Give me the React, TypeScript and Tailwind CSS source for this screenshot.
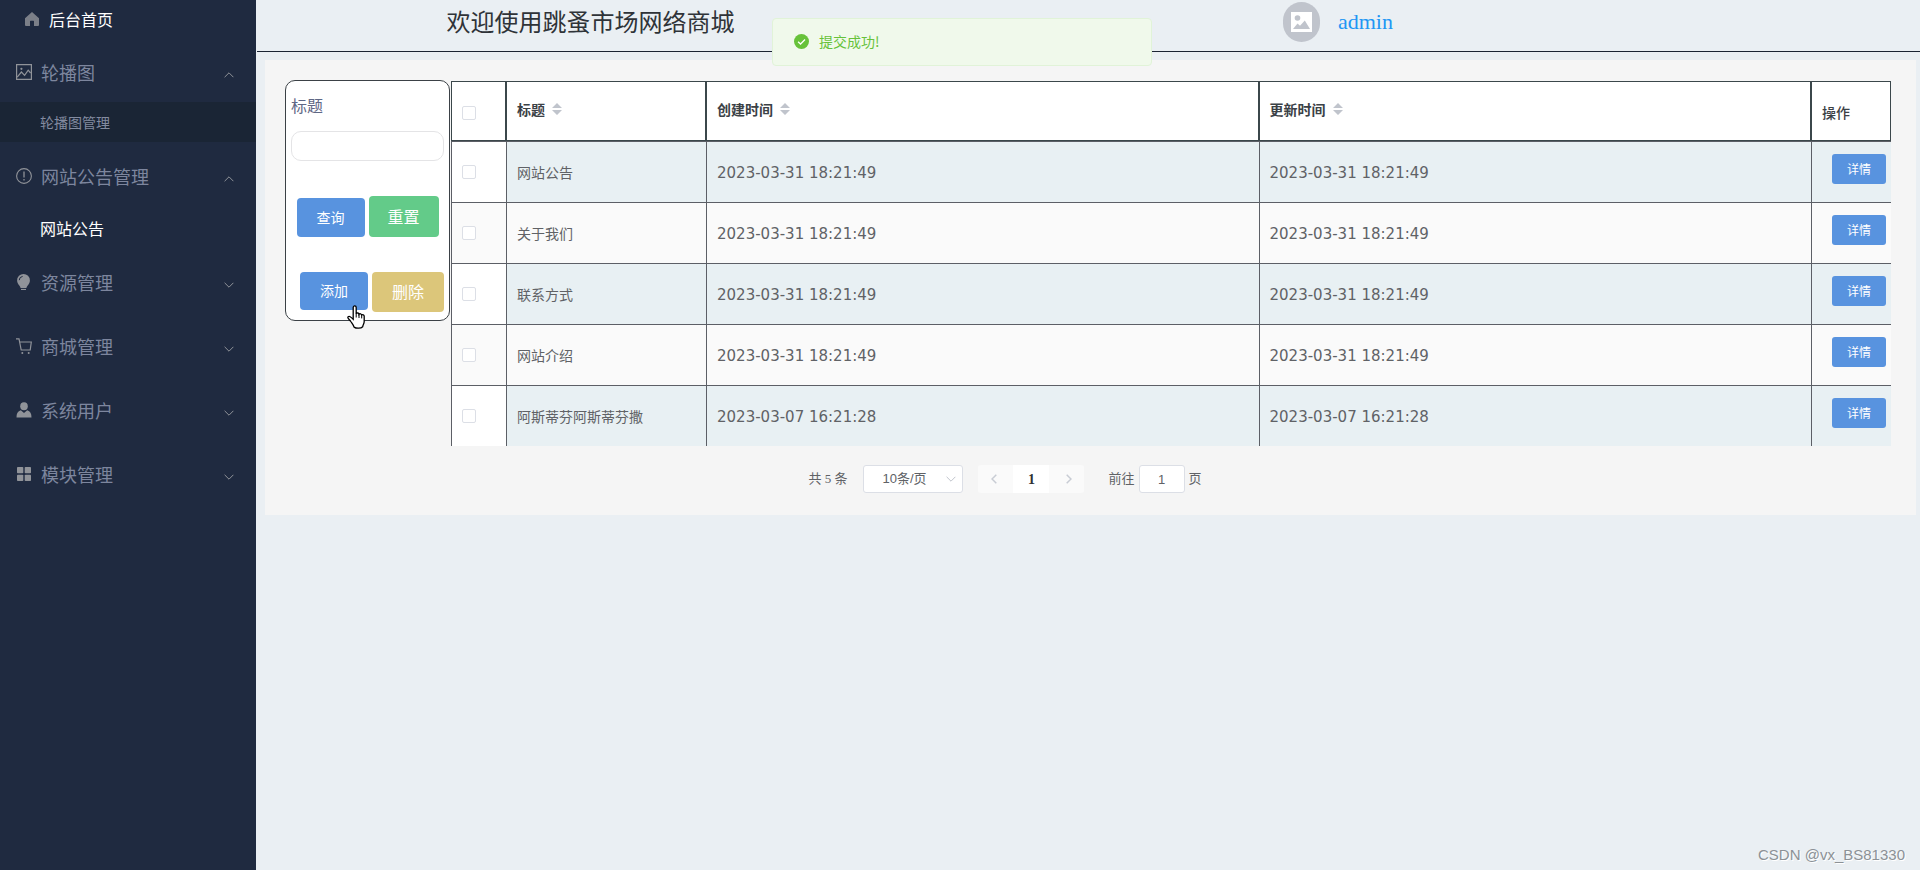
import { useState } from "react";
import type { ReactNode } from "react";
import clsx from "clsx";

// ── Types and data ────────────────────────────────────────────────────────────

type Notice = {
  id: number;
  title: string;
  createdAt: string;
  updatedAt: string;
};

type MenuGroup = {
  label: string;
  icon: ReactNode;
  open?: boolean;
  children?: ReactNode;
};

const NOTICES: Notice[] = [
  { id: 1, title: "网站公告", createdAt: "2023-03-31 18:21:49", updatedAt: "2023-03-31 18:21:49" },
  { id: 2, title: "关于我们", createdAt: "2023-03-31 18:21:49", updatedAt: "2023-03-31 18:21:49" },
  { id: 3, title: "联系方式", createdAt: "2023-03-31 18:21:49", updatedAt: "2023-03-31 18:21:49" },
  { id: 4, title: "网站介绍", createdAt: "2023-03-31 18:21:49", updatedAt: "2023-03-31 18:21:49" },
  { id: 5, title: "阿斯蒂芬阿斯蒂芬撒", createdAt: "2023-03-07 16:21:28", updatedAt: "2023-03-07 16:21:28" },
];

// ── Icons ─────────────────────────────────────────────────────────────────────

function HomeIcon() {
  return (
    <svg className="size-[14px] shrink-0 text-[#7b7f88]" viewBox="0 0 14 14" fill="currentColor" aria-hidden>
      <path d="M7 0 14 6.2V13a1 1 0 0 1-1 1H9V9.4a.6.6 0 0 0-.6-.6H5.6a.6.6 0 0 0-.6.6V14H1a1 1 0 0 1-1-1V6.2z" />
    </svg>
  );
}

function PictureIcon() {
  return (
    <svg className="size-4" viewBox="0 0 16 16" fill="none" stroke="currentColor" aria-hidden>
      <path d="M.6 .6h14.8v14.8H.6z" strokeWidth={1.2} />
      <path d="M1.200 13.200 5.400 8 8.600 11.400 12.200 6.200 14.600 9" strokeWidth={1.2} />
      <circle cx="5.4" cy="4.8" r="1.1" fill="currentColor" stroke="none" />
    </svg>
  );
}

function WarningIcon() {
  return (
    <svg className="size-4" viewBox="0 0 16 16" fill="none" stroke="currentColor" strokeWidth={1.1} aria-hidden>
      <circle cx="8" cy="8" r="7.4" />
      <path d="M8 3.6v6" strokeWidth={1.3} />
      <path d="M8 11v1.4" strokeWidth={1.3} />
    </svg>
  );
}

function BulbIcon() {
  return (
    <svg className="size-4" viewBox="0 0 16 16" aria-hidden>
      <path
        fill="currentColor"
        d="M7.5 0a6.4 6.4 0 0 1 6.4 6.4c0 2.3-1.1 3.6-2.2 5C11 12.2 10.6 13 10.4 14H4.6c-.2-1-.6-1.8-1.3-2.6C2.2 10 1.1 8.7 1.1 6.4A6.4 6.4 0 0 1 7.5 0z"
      />
      <path fill="currentColor" d="M5 14.9h5v1.1H5z" />
      <path d="M3.2 6.2a4 4 0 0 1 3.4-3.8" fill="none" stroke="#1f2a40" strokeWidth={1} />
    </svg>
  );
}

function CartIcon() {
  return (
    <svg className="size-4" viewBox="0 0 16 16" fill="none" stroke="currentColor" strokeWidth={1.2} aria-hidden>
      <path d="M0 .8h3L5.200 12H14.200L15.300 4H3.800" />
      <circle cx="6.3" cy="14.9" r="1" fill="currentColor" stroke="none" />
      <circle cx="12.7" cy="14.9" r="1" fill="currentColor" stroke="none" />
    </svg>
  );
}

function UserIcon() {
  return (
    <svg className="size-4" viewBox="0 0 16 16" fill="currentColor" aria-hidden>
      <ellipse cx="8" cy="4.2" rx="3.8" ry="4" />
      <path d="M.5 15.500c0-4 1.200-6.300 4.300-7.300L8 11l3.200-2.800c3.100 1 4.300 3.300 4.300 7.300z" />
    </svg>
  );
}

function MenuIcon() {
  return (
    <svg className="size-4" viewBox="0 0 16 16" fill="currentColor" aria-hidden>
      <rect x="1" y="1" width="6.3" height="6.3" rx=".8" />
      <rect x="8.7" y="1" width="6.3" height="6.3" rx=".8" />
      <rect x="1" y="8.7" width="6.3" height="6.3" rx=".8" />
      <rect x="8.7" y="8.7" width="6.3" height="6.3" rx=".8" />
    </svg>
  );
}

function Chevron({ className }: { className?: string }) {
  return (
    <svg className={clsx("h-[6px] w-[10px]", className)} viewBox="0 0 10 6" fill="none" stroke="currentColor" aria-hidden>
      <path d="M.6 .8 5 5.2 9.4 .8" />
    </svg>
  );
}

function SortCaret() {
  return (
    <svg className="h-[12px] w-[10px] text-[#c0c4cc]" viewBox="0 0 10 12" fill="currentColor" aria-hidden>
      <path d="M5 0 10 5H0zM5 12 0 7h10z" />
    </svg>
  );
}

function HandCursor() {
  return (
    <svg className="pointer-events-none absolute top-[224px] left-[61px] h-[25px] w-[19px]" viewBox="0 0 19 25" aria-hidden>
      <path
        d="M6.2 2.6c0-2.2 3-2.2 3 0v6c.5-1 2.6-.8 2.8.7.6-1 2.5-.7 2.7.8.8-.8 2.500-.4 2.500 1.200v5.200c0 2.300-1.200 3.300-1.500 5.200-1.800 1.800-6.300 2-8.600.4C6.500 20 5 18.200 3.800 16.500 2.800 15 1.400 14 .9 12.800c-.3-1.300 1.200-1.800 2.300-1.100 1.200.7 2 1.600 3 2.600z"
        fill="#fff"
        stroke="#000"
        strokeWidth={1.3}
      />
      <path d="M9.2 8v4.5M12 9.4v3.6M14.7 10.4v3" fill="none" stroke="#000" />
    </svg>
  );
}

// ── Sidebar ───────────────────────────────────────────────────────────────────

const MENU: MenuGroup[] = [
  {
    label: "轮播图",
    icon: <PictureIcon />,
    open: true,
    children: (
      <a href="#carousel" className="flex h-10 items-center bg-[#1a2535] pl-10 text-sm text-[#838ba0]">
        轮播图管理
      </a>
    ),
  },
  {
    label: "网站公告管理",
    icon: <WarningIcon />,
    open: true,
    children: (
      <a href="#notice" className="flex h-[42px] items-center pt-[2px] pl-10 text-base text-white">
        网站公告
      </a>
    ),
  },
  { label: "资源管理", icon: <BulbIcon /> },
  { label: "商城管理", icon: <CartIcon /> },
  { label: "系统用户", icon: <UserIcon /> },
  { label: "模块管理", icon: <MenuIcon /> },
];

function Sidebar() {
  return (
    <nav className="w-64 shrink-0 bg-[#1f2a40]">
      <a href="#home" className="flex h-[38px] items-center gap-[10px] pl-[25px] text-base text-white">
        <HomeIcon />
        后台首页
      </a>
      {MENU.map((group) => (
        <div key={group.label}>
          <button
            type="button"
            aria-expanded={!!group.open}
            className="flex h-16 w-full items-center pt-1 pr-[22px] pl-4 text-lg text-[#7d869e]"
          >
            <span className="mr-[9px] text-[#909399]">{group.icon}</span>
            {group.label}
            <Chevron className={clsx("mt-[6px] ml-auto text-[#909399]", group.open && "rotate-180")} />
          </button>
          {group.children}
        </div>
      ))}
    </nav>
  );
}

// ── Header ────────────────────────────────────────────────────────────────────

function Header() {
  return (
    <header className="flex h-[52px] border-b border-[#1b2433] pb-2">
      <h1 className="flex w-2/5 items-center justify-center pb-[2px] pl-[2px] text-2xl text-[#2f3338]">
        欢迎使用跳蚤市场网络商城
      </h1>
      <div className="flex w-1/2 items-center justify-center gap-[18px]">
        <span className="flex h-10 w-[37px] items-center justify-center rounded-full bg-[#c0c4cc]">
          <svg className="h-5 w-[21px]" viewBox="0 0 21 20" aria-hidden>
            <path d="M0 0h21v20H0z" fill="#fff" />
            <circle cx="6.5" cy="6" r="2.8" fill="#c0c4cc" />
            <path d="M2 17 6.5 11.5 9 13.8 13.8 8.5 19 17z" fill="#c0c4cc" />
          </svg>
        </span>
        <a href="#admin" className="font-['Liberation_Serif',serif] text-[22px] text-[#2196f3]">
          admin
        </a>
      </div>
    </header>
  );
}

// ── Search card ───────────────────────────────────────────────────────────────

function SearchCard() {
  const [title, setTitle] = useState("");

  return (
    <form
      className="relative mr-px w-[165px] shrink-0 self-start rounded-[10px] border border-[#3b4146] bg-white px-[5px] pt-[10px] pb-2"
      onSubmit={(e) => e.preventDefault()}
    >
      <label htmlFor="notice-title" className="block leading-7 text-[#5f6785]">
        标题
      </label>
      <input
        id="notice-title"
        type="text"
        value={title}
        onChange={(e) => setTitle(e.target.value)}
        className="mt-3 block h-[30px] w-full rounded-[10px] border border-[#e4e4e6] px-2 text-sm outline-none"
      />
      <div className="mt-[35px] flex items-end justify-center gap-1">
        <button type="submit" className="h-[39px] w-[68px] rounded bg-[#5893df] pb-[2px] text-sm text-white">
          查询
        </button>
        <button
          type="reset"
          onClick={() => setTitle("")}
          className="h-[41px] w-[70px] rounded bg-[#63cb89] pb-[2px] text-base text-white"
        >
          重置
        </button>
      </div>
      <div className="mt-[35px] flex items-start justify-end gap-1">
        <button type="button" className="h-[38px] w-[68px] rounded bg-[#5893df] pb-[2px] text-sm text-white">
          添加
        </button>
        <button type="button" className="h-10 w-[72px] rounded bg-[#dcc67a] pb-[2px] text-base text-white">
          删除
        </button>
      </div>
      <HandCursor />
    </form>
  );
}

// ── Table ─────────────────────────────────────────────────────────────────────

const TH = "border border-[#3b474b] bg-white px-[10px] text-left";

function Checkbox({ label }: { label: string }) {
  return (
    <input
      type="checkbox"
      aria-label={label}
      className="block size-[14px] appearance-none rounded-[2px] border border-[#dcdfe6] bg-white checked:bg-[#409eff]"
    />
  );
}

function SortHeader({ children }: { children: ReactNode }) {
  return (
    <th className={TH}>
      <button type="button" className="flex items-center gap-[7px] pb-1 font-bold">
        {children}
        <SortCaret />
      </button>
    </th>
  );
}

function NoticeTable() {
  return (
    <table className="w-full min-w-0 table-fixed border-separate border-spacing-0 text-sm text-[#606266]">
      <colgroup>
        <col className="w-[55px]" />
        <col className="w-[200px]" />
        <col />
        <col />
        <col className="w-[80px]" />
      </colgroup>
      <thead>
        <tr className="h-[60px] text-[#3b4146]">
          <th className={clsx(TH, "pt-1")}>
            <Checkbox label="全选" />
          </th>
          <SortHeader>标题</SortHeader>
          <SortHeader>创建时间</SortHeader>
          <SortHeader>更新时间</SortHeader>
          <th className={clsx(TH, "pt-[2px] font-medium")}>操作</th>
        </tr>
      </thead>
      <tbody>
        {NOTICES.map((row, i) => {
          const striped = i % 2 === 1;
          const cell = clsx("border-t border-l border-[#5c5f66] px-[10px]", striped ? "bg-[#fafafa]" : "bg-[#e8f0f3]");
          return (
            <tr key={row.id} className="h-[61px]">
              <td className={clsx("border-t border-l border-[#5c5f66] px-[10px]", striped ? "bg-[#fafafa]" : "bg-white")}>
                <Checkbox label={row.title} />
              </td>
              <td className={cell}>{row.title}</td>
              <td className={clsx(cell, "pt-1 font-['DejaVu_Sans',sans-serif] text-[15px]")}>{row.createdAt}</td>
              <td className={clsx(cell, "pt-1 font-['DejaVu_Sans',sans-serif] text-[15px]")}>{row.updatedAt}</td>
              <td className={clsx(cell, "pr-[5px] pb-[6px] pl-5")}>
                <button type="button" className="block h-[30px] w-full rounded-[3px] bg-[#5893df] text-xs text-white">
                  详情
                </button>
              </td>
            </tr>
          );
        })}
      </tbody>
    </table>
  );
}

// ── Pagination ────────────────────────────────────────────────────────────────

function Pagination() {
  const [page, setPage] = useState("1");

  return (
    <div className="mt-[19px] mr-[166px] flex h-7 items-center justify-center font-['Liberation_Serif','Noto_Sans_CJK_SC',serif] text-[13px] text-[#606266]">
      <span>共 5 条</span>
      <div className="relative ml-4">
        <select
          aria-label="每页条数"
          className="block h-7 w-[100px] appearance-none rounded-[3px] border border-[#dcdfe6] bg-white pl-[18px] font-['Liberation_Sans','Noto_Sans_CJK_SC',sans-serif] outline-none"
        >
          <option>10条/页</option>
          <option>20条/页</option>
        </select>
        <Chevron className="pointer-events-none absolute top-[11px] right-[7px] text-[#c0c4cc]" />
      </div>
      <div className="ml-[15px] flex h-7 overflow-hidden rounded-[3px]">
        <button type="button" aria-label="上一页" disabled className="flex w-[35px] items-center justify-center bg-[#fafafa] pr-1">
          <svg className="h-[10px] w-[6px]" viewBox="0 0 6 10" fill="none" stroke="#c8ccd4" strokeWidth={1.5} aria-hidden>
            <path d="M5.300 .7 1 5l4.300 4.300" />
          </svg>
        </button>
        <button type="button" className="w-[36px] bg-white text-[14px] font-bold text-[#303133]">
          1
        </button>
        <button type="button" aria-label="下一页" disabled className="flex w-[35px] items-center justify-center bg-[#fafafa] pl-1">
          <svg className="h-[10px] w-[6px]" viewBox="0 0 6 10" fill="none" stroke="#c8ccd4" strokeWidth={1.5} aria-hidden>
            <path d="M.7 .7 5 5 .7 9.3" />
          </svg>
        </button>
      </div>
      <label htmlFor="goto-page" className="ml-6">
        前往
      </label>
      <input
        id="goto-page"
        type="text"
        value={page}
        onChange={(e) => setPage(e.target.value)}
        className="mx-1 h-7 w-[46px] rounded-[3px] border border-[#dcdfe6] bg-white text-center font-['Liberation_Sans',sans-serif] outline-none"
      />
      <span>页</span>
    </div>
  );
}

// ── Success toast ─────────────────────────────────────────────────────────────

function Toast() {
  return (
    <div
      role="alert"
      className="absolute top-[18px] left-1/2 flex h-12 w-[380px] -translate-x-[188px] items-center gap-[10px] rounded border border-[#e1f3d8] bg-[#f0f9eb] pb-[2px] pl-[21px] text-sm text-[#67c23a]"
    >
      <svg className="size-[15px]" viewBox="0 0 14 14" aria-hidden>
        <circle cx="7" cy="7" r="7" fill="#67c23a" />
        <path d="M3.8 7.2 6.1 9.4 10.3 5.2" fill="none" stroke="#fff" strokeWidth={1.2} />
      </svg>
      提交成功!
    </div>
  );
}

// ── Page ──────────────────────────────────────────────────────────────────────

export default function App() {
  return (
    <div className="relative flex min-h-screen bg-[#eaeff3] font-['Noto_Sans_CJK_SC',sans-serif]">
      <Sidebar />
      <div className="ml-px min-w-0 flex-1">
        <Header />
        <main className="mt-2 mr-1 ml-2 bg-[#f5f5f5] pt-5 pr-[25px] pb-[22px] pl-5">
          <div className="flex">
            <SearchCard />
            <div className="min-w-0 flex-1 pt-px">
              <NoticeTable />
            </div>
          </div>
          <Pagination />
        </main>
      </div>
      <Toast />
      <p className="absolute right-[15px] bottom-1 font-['Liberation_Sans',sans-serif] text-[15px] text-[#8c9196] [text-shadow:1px_1px_0_#fff]">
        CSDN @vx_BS81330
      </p>
    </div>
  );
}
